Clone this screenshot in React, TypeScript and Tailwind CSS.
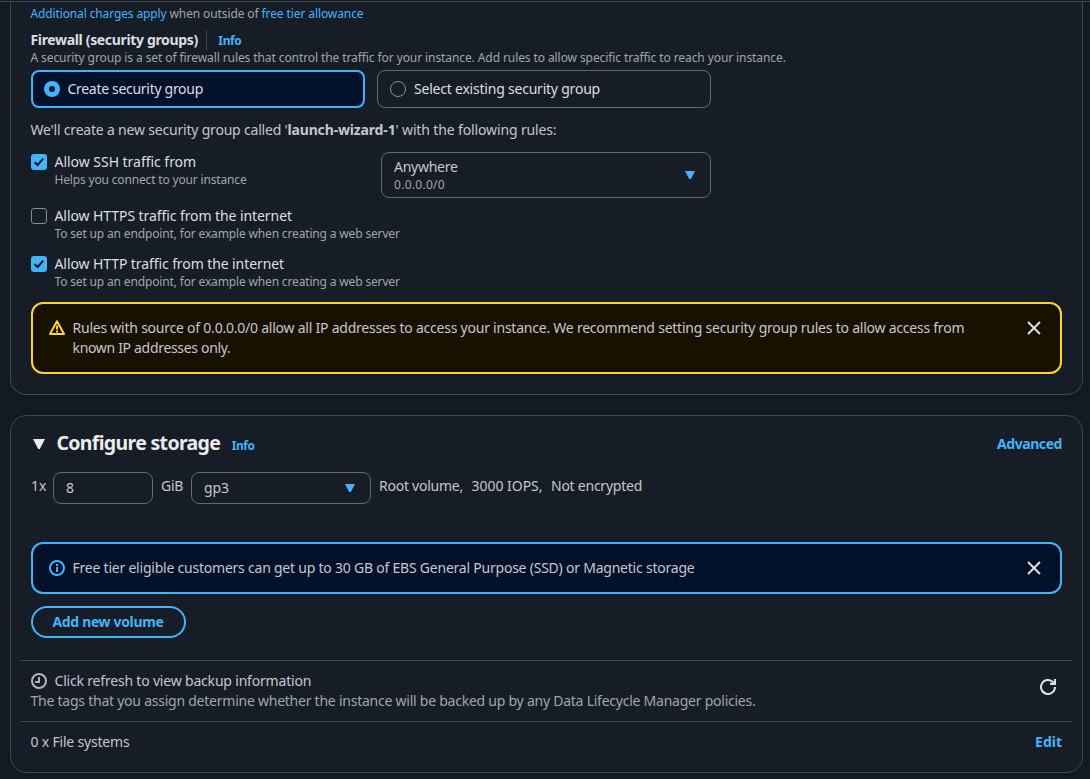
import type { ReactNode } from "react";

function Check({ checked }: { checked?: boolean }) {
  if (!checked) return <span className="mt-0.5 size-4 shrink-0 rounded-[3px] border border-[#8c8c94]" />;
  return (
    <span className="mt-0.5 size-4 shrink-0 rounded-[3px] bg-[#42b4ff]">
      <svg viewBox="0 0 16 16" className="size-4" fill="none" stroke="#0f141a" strokeWidth="2">
        <path d="M3.6 8.2 6.6 11 12.2 4.6" />
      </svg>
    </span>
  );
}

function Caret({ className }: { className: string }) {
  return (
    <svg viewBox="0 0 16 16" className={className} fill="currentColor">
      <path d="M3 4h10L8.8 12H7.2Z" />
    </svg>
  );
}

function Close() {
  return (
    <svg viewBox="0 0 16 16" className="size-4 shrink-0" fill="none" stroke="#dedee3" strokeWidth="2">
      <path d="m2 2 12 12M14 2 2 14" />
    </svg>
  );
}

function CheckRow({ checked, label, hint }: { checked?: boolean; label: ReactNode; hint: ReactNode }) {
  return (
    <div className="flex gap-[7.5px]">
      <Check checked={checked} />
      <div>
        <div className="text-sm leading-5 text-[#dedee3]">{label}</div>
        <div className="text-xs leading-4 text-[#a4a4ad]">{hint}</div>
      </div>
    </div>
  );
}

export default function App() {
  return (
    <div className="h-[779px] overflow-hidden bg-[#131920] font-['Noto_Sans',sans-serif] text-sm leading-5 whitespace-nowrap text-[#c6c6cd]">
      <div className="h-0.5 border-b border-[#424650]" />

      <section className="mr-[7px] ml-[10px] h-[393px] rounded-b-2xl border border-t-0 border-[#424650] bg-[#161d26] px-5 pt-1">
        <div className="-ml-[0.5px] flex gap-[3px] text-xs leading-4 text-[#a4a4ad]">
          <a className="tracking-[-0.127px] text-[#42b4ff]">Additional charges apply</a>
          <span className="tracking-[-0.111px]">when outside of</span>
          <a className="tracking-[-0.096px] text-[#42b4ff]">free tier allowance</a>
        </div>
        <div className="mt-2 -ml-[0.5px] flex h-5 items-center">
          <h3 className="text-sm leading-5 font-bold tracking-[-0.34px] text-[#dedee3]">Firewall (security groups)</h3>
          <span className="ml-2 h-5 w-px bg-[#424650]" />
          <a className="mt-0.5 ml-[11.5px] text-xs font-bold tracking-[-0.4px] text-[#42b4ff]">Info</a>
        </div>
        <p className="-ml-[0.5px] text-xs leading-4 tracking-[-0.09px] text-[#a4a4ad]">
          A security group is a set of firewall rules that control the traffic for your instance. Add rules to allow specific traffic to reach your instance.
        </p>
        <div className="mt-1 flex gap-3 text-[#dedee3]">
          <div className="flex h-[38px] w-[334px] items-center gap-[7.5px] rounded-lg border-2 border-[#42b4ff] bg-[#001129] pl-[11px]">
            <span className="size-4 rounded-full border-5 border-[#42b4ff] bg-[#0f141a]" />
            <span className="tracking-[-0.3px]">Create security group</span>
          </div>
          <div className="flex h-[38px] w-[334px] items-center gap-2 rounded-lg border border-[#656871] pl-3">
            <span className="size-4 rounded-full border border-[#8c8c94]" />
            <span className="tracking-[-0.216px]">Select existing security group</span>
          </div>
        </div>
        <p className="mt-3 -ml-[0.5px]">
          <span className="tracking-[-0.197px]">We'll create a new security group called '</span>
          <b className="tracking-[-0.156px]">launch-wizard-1</b>
          <span className="tracking-[-0.134px]">' with the following rules:</span>
        </p>
        <div className="mt-3 flex">
          <div className="w-[350px]">
            <CheckRow
              checked
              label={<span className="tracking-[-0.03px]">Allow SSH traffic from</span>}
              hint={<span className="tracking-[-0.165px]">Helps you connect to your instance</span>}
            />
          </div>
          <div className="flex h-[46px] w-[330px] items-center justify-between rounded-lg border border-[#656871] px-3">
            <div>
              <div className="leading-[18px] tracking-[-0.27px]">Anywhere</div>
              <div className="text-xs leading-[17px] tracking-[0.285px] text-[#a4a4ad]">0.0.0.0/0</div>
            </div>
            <Caret className="size-4 text-[#42b4ff]" />
          </div>
        </div>
        <div className="mt-2 flex flex-col gap-3">
          <CheckRow
            label={<span className="tracking-[-0.08px]">Allow HTTPS traffic from the internet</span>}
            hint={<span className="tracking-[-0.155px]">To set up an endpoint, for example when creating a web server</span>}
          />
          <CheckRow
            checked
            label={<span className="tracking-[-0.09px]">Allow HTTP traffic from the internet</span>}
            hint={<span className="tracking-[-0.155px]">To set up an endpoint, for example when creating a web server</span>}
          />
        </div>
        <div className="mt-3 flex h-[72px] w-[1031px] rounded-xl border-2 border-[#ffd42f] bg-[#191100] pt-3.5 pr-[18px] pl-4">
          <svg viewBox="0 0 16 16" className="mt-0.5 size-4 shrink-0" fill="none" stroke="#ffd42f" strokeWidth="2" strokeLinejoin="round">
            <path d="M8 1.2 15 14H1ZM8 5.5v4M8 10.6v2" />
          </svg>
          <p className="ml-[7.5px] flex-1">
            <span className="block tracking-[-0.231px]">
              Rules with source of 0.0.0.0/0 allow all IP addresses to access your instance. We recommend setting security group rules to allow access from
            </span>
            <span className="block tracking-[-0.32px]">known IP addresses only.</span>
          </p>
          <span className="mt-0.5"><Close /></span>
        </div>
      </section>

      <section className="mt-5 mr-[7px] ml-[10px] h-[358px] rounded-2xl border border-[#424650] bg-[#161d26] px-[10px] pt-[15px]">
        <div className="flex h-6 items-center px-[10px]">
          <svg viewBox="0 0 16 16" className="mt-px size-4 text-[#ebebf0]" fill="currentColor">
            <path d="M2 3h12L8.8 13H7.2Z" />
          </svg>
          <h2 className="ml-[9.5px] text-[19.5px] leading-6 font-bold tracking-[-0.68px] text-[#ebebf0]">Configure storage</h2>
          <a className="mt-1.5 ml-[11.5px] text-xs font-bold tracking-[-0.4px] text-[#42b4ff]">Info</a>
          <a className="mt-0.5 ml-auto font-bold tracking-[-0.432px] text-[#42b4ff]">Advanced</a>
        </div>
        <div className="mt-[17px] flex px-[10px]">
          <span className="mt-1 w-[22px]">1x</span>
          <div className="h-8 w-[100px] rounded-lg border border-[#656871] pt-[5px] pl-3">8</div>
          <span className="mt-1 ml-2 w-[30px] tracking-[-0.302px]">GiB</span>
          <div className="flex h-8 w-[180px] items-center justify-between rounded-lg border border-[#656871] px-3">
            <span className="tracking-[-0.078px]">gp3</span>
            <Caret className="size-4 text-[#42b4ff]" />
          </div>
          <div className="mt-1 ml-2 flex gap-[8.5px]">
            <span className="tracking-[-0.245px]">Root volume,</span>
            <span className="tracking-[-0.027px]">3000 IOPS,</span>
            <span className="tracking-[-0.244px]">Not encrypted</span>
          </div>
        </div>
        <div className="mt-[38px] ml-[10px] flex h-[52px] w-[1031px] items-center rounded-xl border-2 border-[#42b4ff] bg-[#001129] pr-[18px] pl-4">
          <svg viewBox="0 0 16 16" className="size-4" fill="none" stroke="#42b4ff" strokeWidth="2">
            <circle cx="8" cy="8" r="7" />
            <path d="M8 7v5M8 4v2" />
          </svg>
          <span className="ml-[7.5px] flex-1 tracking-[-0.224px]">
            Free tier eligible customers can get up to 30 GB of EBS General Purpose (SSD) or Magnetic storage
          </span>
          <Close />
        </div>
        <button className="mt-3 ml-[10px] block h-8 w-[155px] rounded-full border-2 border-[#42b4ff] pr-px text-center leading-5 font-bold tracking-[-0.347px] text-[#42b4ff]">
          Add new volume
        </button>
        <div className="mt-[22px] flex h-[61px] items-center border-t border-[#424650] px-[10px]">
          <div className="flex-1">
            <div className="flex items-center gap-[7.5px]">
              <svg viewBox="0 0 16 16" className="size-4" fill="none" stroke="#b4b4bb" strokeWidth="2">
                <circle cx="8" cy="8" r="7" />
                <path d="M8 4v5H4" />
              </svg>
              <span className="tracking-[-0.19px]">Click refresh to view backup information</span>
            </div>
            <div className="-ml-[0.5px] tracking-[-0.241px] text-[#a4a4ad]">
              The tags that you assign determine whether the instance will be backed up by any Data Lifecycle Manager policies.
            </div>
          </div>
          <svg viewBox="0 0 16 16" className="mr-1.5 mb-2 size-4" fill="none" stroke="#dedee3" strokeWidth="2">
            <path d="M15 8a7 7 0 1 1-2.2-5.1L14.5 4.6M15 0v5h-5" />
          </svg>
        </div>
        <div className="flex h-10 items-center justify-between border-t border-[#424650] px-[10px]">
          <span className="-ml-[0.5px] tracking-[-0.189px]">0 x File systems</span>
          <a className="font-bold text-[#42b4ff]">Edit</a>
        </div>
      </section>
    </div>
  );
}
